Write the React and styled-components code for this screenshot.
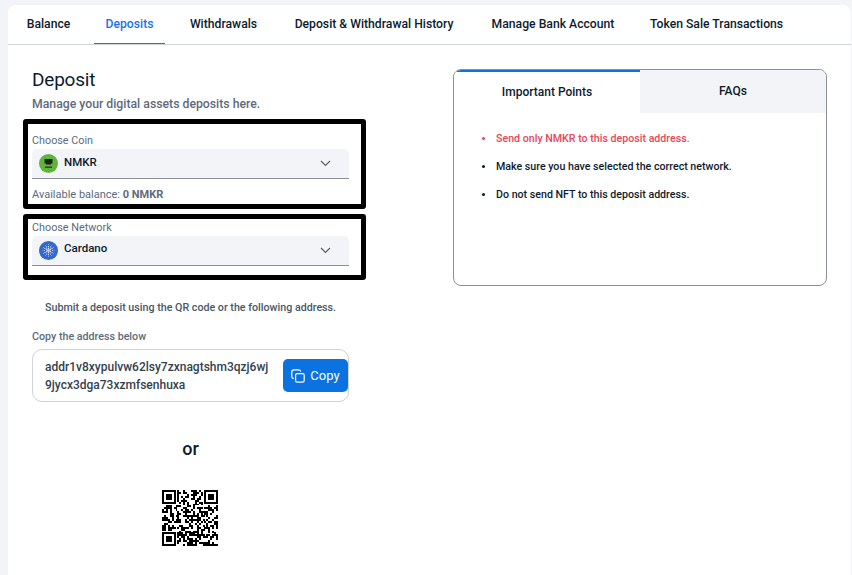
import React from "react";
import styled, { createGlobalStyle } from "styled-components";

const Global = createGlobalStyle`
  html, body { margin: 0; padding: 0; background: #f3f4f8; height: 575px; overflow: hidden; }
  body { font-family: "Roboto", "Noto Sans", sans-serif; color: #0d1b2e; }
  * { box-sizing: border-box; }
`;

const Card = styled.main`
  margin: 5px 1px 0 8px;
  height: 570px;
  background: #fff;
  border-radius: 8px 8px 0 0;
  overflow: hidden;
`;
const TabBar = styled.nav`
  display: flex;
  gap: 11px;
  height: 40px;
  padding-left: 6px;
  border-bottom: 1px solid #d0d3d8;
`;
const Tab = styled.a`
  width: ${p => p.$w}px;
  height: 39px;
  margin-bottom: -1px;
  flex: none;
  padding-bottom: 1px;
  display: flex;
  align-items: center;
  justify-content: center;
  font-size: 12.2px;
  font-weight: 500;
  white-space: nowrap;
  color: ${p => (p.$active ? "#1a73e8" : "#0d1b2e")};
  border-bottom: ${p => (p.$active ? "1px solid #1a73e8" : "none")};
`;
const Body = styled.div`
  display: flex;
  align-items: flex-start;
`;
const Left = styled.section`
  width: 343px;
  margin-left: 15px;
  margin-top: 22px;
`;
const Title = styled.h1`
  margin: 0 0 0 9px;
  font-size: 19px;
  line-height: 26px;
  font-weight: 400;
  letter-spacing: -0.2px;
  color: #0d1b2e;
`;
const Sub = styled.p`
  margin: 2px 0 6px 9px;
  font-size: 12.25px;
  line-height: 18px;
  font-weight: 500;
  color: #5d6b7c;
`;
const Highlight = styled.div`
  border: 5px solid #000;
  border-radius: 3px;
  padding: ${p => p.$pad};
  margin-bottom: 5px;
`;
const FieldLabel = styled.div`
  font-size: 10.8px;
  line-height: 14px;
  color: #5d6b7c;
`;
const Select = styled.div`
  height: 30px;
  margin-top: 1px;
  display: flex;
  align-items: center;
  padding: 0 18px 0 7px;
  background: #f3f4f8;
  border-radius: 5px 5px 0 0;
  border-bottom: 1px solid #8a9096;
`;
const CoinName = styled.span`
  margin-left: 6px;
  margin-bottom: ${p => p.$lift}px;
  font-size: 11.5px;
  font-weight: 500;
  flex: 1;
  color: #0d1b2e;
`;
const Balance = styled.div`
  margin-top: 9px;
  font-size: 11px;
  line-height: 14px;
  color: #5d6b7c;
  b { font-weight: 700; }
`;
const Submit = styled.p`
  margin: 21px 0 0 22px;
  font-size: 10.7px;
  line-height: 14px;
  font-weight: 500;
  color: #4b5766;
`;
const CopyLabel = styled.div`
  margin: 15px 0 0 9px;
  font-size: 10.7px;
  line-height: 14px;
  font-weight: 500;
  color: #5d6b7c;
`;
const AddressBox = styled.div`
  margin: 5px 17px 0 9px;
  height: 53px;
  display: flex;
  align-items: center;
  justify-content: space-between;
  padding-left: 12px;
  border: 1px solid #cfd2d6;
  border-radius: 10px;
`;
const Address = styled.div`
  margin-top: 1px;
  font-size: 12px;
  line-height: 18px;
  font-weight: 500;
  white-space: pre-line;
  color: #333f4e;
`;
const CopyButton = styled.button`
  width: 65px;
  height: 33px;
  flex: none;
  border: 0;
  border-radius: 5px;
  background: #0b72e2;
  color: #fff;
  display: flex;
  align-items: center;
  justify-content: center;
  gap: 5px;
  padding: 0;
  font: 400 13px "Roboto", sans-serif;
`;
const Or = styled.div`
  margin: 36px 17px 0 9px;
  text-align: center;
  font-size: 18px;
  line-height: 22px;
  font-weight: 500;
  color: #0d1b2e;
`;
const QrWrap = styled.div`
  margin: 30px 19px 0 9px;
  display: flex;
  justify-content: center;
`;
const Panel = styled.aside`
  width: 374px;
  height: 217px;
  margin: 24px 0 0 87px;
  border: 1px solid #8a9096;
  border-radius: 8px;
  overflow: hidden;
`;
const PanelTabs = styled.div`
  display: grid;
  grid-template-columns: 186px 1fr;
  height: 43px;
`;
const PanelTab = styled.div`
  display: flex;
  align-items: center;
  justify-content: center;
  padding-bottom: 2px;
  font-size: 12px;
  font-weight: 500;
  color: #0d1b2e;
  background: ${p => (p.$active ? "#fff" : "#f3f4f8")};
  border-top: ${p => (p.$active ? "2px solid #0b72e2" : "none")};
`;
const Points = styled.ul`
  list-style: none;
  margin: 0;
  padding: 11px 0 0 28px;
`;
const Point = styled.li`
  position: relative;
  padding-left: 14px;
  height: 28px;
  display: flex;
  align-items: center;
  font-size: 10.65px;
  font-weight: 500;
  color: ${p => (p.$danger ? "#e8465a" : "#0d1b2e")};
  &::before {
    content: "";
    position: absolute;
    left: 0;
    top: 13px;
    width: 3px;
    height: 3px;
    border-radius: 50%;
    background: currentColor;
  }
`;

const Chevron = () => (
  <svg width="11" height="7" viewBox="0 0 11 7" fill="none" stroke="#5a6068" strokeWidth="1.2">
    <path d="M1 1 5.5 5.5 10 1" />
  </svg>
);
const NmkrIcon = () => (
  <svg width="19" height="19" viewBox="0 0 19 19">
    <circle cx="9.5" cy="9.5" r="9.5" fill="#62b33c" />
    <path d="M5.5 5h8v4.5h-1.5v1h-5v-1h-1.5z" fill="#14261a" />
    <rect x="6" y="12.6" width="7" height="1.1" fill="#14261a" />
  </svg>
);
const dots = [[0,0,1.2],[0,-2.2,.8],[0,2.2,.8],[-1.9,-1.1,.8],[1.9,-1.1,.8],[-1.9,1.1,.8],[1.9,1.1,.8],[0,-4.2,.6],[0,4.2,.6],[-3.6,-2.1,.6],[3.6,-2.1,.6],[-3.6,2.1,.6],[3.6,2.1,.6],[-2.1,-3.6,.55],[2.1,-3.6,.55],[-2.1,3.6,.55],[2.1,3.6,.55],[-4.2,0,.55],[4.2,0,.55],[0,-6,.4],[0,6,.4],[-5.2,-3,.4],[5.2,-3,.4],[-5.2,3,.4],[5.2,3,.4],[-3,-5.2,.35],[3,-5.2,.35],[-3,5.2,.35],[3,5.2,.35],[-6,0,.35],[6,0,.35]];
const CardanoIcon = () => (
  <svg width="19" height="19" viewBox="-9.5 -9.5 19 19">
    <circle r="9.5" fill="#3468d1" />
    {dots.map(([x, y, r], i) => <circle key={i} cx={x} cy={y} r={r} fill="#dfe8fb" />)}
  </svg>
);
const CopyIcon = () => (
  <svg width="14" height="14" viewBox="0 0 14 14" fill="none" stroke="#fff" strokeWidth="1.2">
    <rect x="4.6" y="4.6" width="8.6" height="8.6" rx="1.6" />
    <path d="M2.8 9.6C1.5 9.4.8 8.7.8 7.4V3C.8 1.6 1.6.8 3 .8h4.4c1.3 0 2 .7 2.2 1.9" />
  </svg>
);

const N = 29;
const seed = "7fa91c3be2d4058a17c6e3f2b90d4a6158e7c2a3f1940bd6e5c87a2f3b1d60c9e47f2a85d3b16c09e7f4a2d8b35c6e1f07a94d2c8b6e3f105a7d9c4e2b8f6a130d5e7c9b24f86a1d3e05c7b92f4e8a6d1c30b5f7e92d48a6c1e3b0f57d924c8ea61b3f0d7259c4e8a3b6f1d07e52c9a48b3f6e1d0".split("").map(c => parseInt(c, 16));
const finder = (r, c) => {
  for (const [y, x] of [[0, 0], [0, 22], [22, 0]]) {
    const a = r - y, b = c - x;
    if (a >= 0 && b >= 0 && a <= 6 && b <= 6) {
      if (a === 0 || a === 6 || b === 0 || b === 6) return 1;
      return a >= 2 && a <= 4 && b >= 2 && b <= 4 ? 1 : 0;
    }
  }
  if ((r === 7 && (c < 8 || c > 20)) || (c === 7 && (r < 8 || r > 20)) || (r === 21 && c < 8) || (c === 21 && r < 8)) return 0;
  return null;
};
const QrCode = () => {
  const cells = [];
  for (let r = 0; r < N; r++) for (let c = 0; c < N; c++) {
    const f = finder(r, c);
    const on = f !== null ? f === 1 : ((seed[(r * 13 + c * 7) % seed.length] >> ((r + c) % 4)) & 1) === 1;
    if (on) cells.push(<rect key={r + "-" + c} x={c} y={r} width="1.02" height="1.02" />);
  }
  return <svg width="56" height="56" viewBox={`0 0 ${N} ${N}`} fill="#000" shapeRendering="crispEdges">{cells}</svg>;
};

export default function App() {
  return (
    <>
      <Global />
      <Card>
        <TabBar>
          <Tab $w={69}>Balance</Tab>
          <Tab $w={71} $active>Deposits</Tab>
          <Tab $w={95}>Withdrawals</Tab>
          <Tab $w={184}>Deposit &amp; Withdrawal History</Tab>
          <Tab $w={152}>Manage Bank Account</Tab>
          <Tab $w={153}>Token Sale Transactions</Tab>
        </TabBar>
        <Body>
          <Left>
            <Title>Deposit</Title>
            <Sub>Manage your digital assets deposits here.</Sub>
            <Highlight $pad="10px 12px 2px 4px">
              <FieldLabel>Choose Coin</FieldLabel>
              <Select><NmkrIcon /><CoinName $lift={3}>NMKR</CoinName><Chevron /></Select>
              <Balance>Available balance: <b>0 NMKR</b></Balance>
            </Highlight>
            <Highlight $pad="2px 12px 9px 4px">
              <FieldLabel>Choose Network</FieldLabel>
              <Select><CardanoIcon /><CoinName $lift={5}>Cardano</CoinName><Chevron /></Select>
            </Highlight>
            <Submit>Submit a deposit using the QR code or the following address.</Submit>
            <CopyLabel>Copy the address below</CopyLabel>
            <AddressBox>
              <Address>{"addr1v8xypulvw62lsy7zxnagtshm3qzj6wj\n9jycx3dga73xzmfsenhuxa"}</Address>
              <CopyButton><CopyIcon />Copy</CopyButton>
            </AddressBox>
            <Or>or</Or>
            <QrWrap><QrCode /></QrWrap>
          </Left>
          <Panel>
            <PanelTabs>
              <PanelTab $active>Important Points</PanelTab>
              <PanelTab>FAQs</PanelTab>
            </PanelTabs>
            <Points>
              <Point $danger>Send only NMKR to this deposit address.</Point>
              <Point>Make sure you have selected the correct network.</Point>
              <Point>Do not send NFT to this deposit address.</Point>
            </Points>
          </Panel>
        </Body>
      </Card>
    </>
  );
}
